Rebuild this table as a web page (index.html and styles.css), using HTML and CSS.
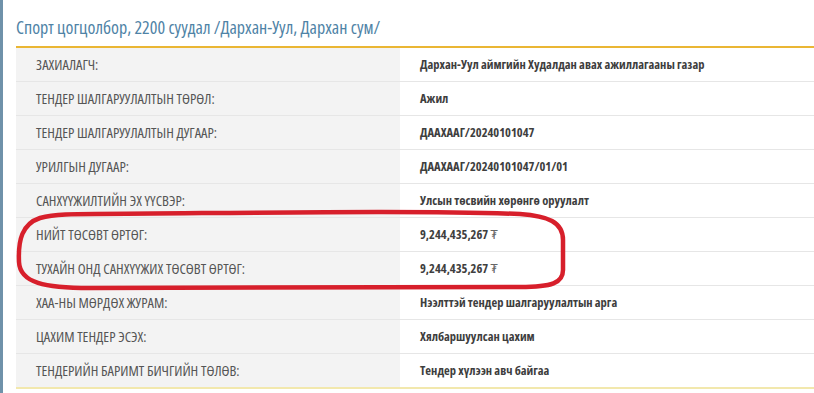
FILE: index.html
```html
<!DOCTYPE html>
<html lang="mn">
<head>
<meta charset="utf-8">
<link rel="stylesheet" href="styles.css">
</head>
<body>
<div class="page">
  <h1 class="title">Спорт цогцолбор, 2200 суудал /Дархан-Уул, Дархан сум/</h1>
  <div class="table">
    <div class="row"><div class="label">ЗАХИАЛАГЧ:</div><div class="value">Дархан-Уул аймгийн Худалдан авах ажиллагааны газар</div></div>
    <div class="row"><div class="label">ТЕНДЕР ШАЛГАРУУЛАЛТЫН ТӨРӨЛ:</div><div class="value">Ажил</div></div>
    <div class="row"><div class="label">ТЕНДЕР ШАЛГАРУУЛАЛТЫН ДУГААР:</div><div class="value">ДААХААГ/20240101047</div></div>
    <div class="row"><div class="label">УРИЛГЫН ДУГААР:</div><div class="value">ДААХААГ/20240101047/01/01</div></div>
    <div class="row"><div class="label">САНХҮҮЖИЛТИЙН ЭХ ҮҮСВЭР:</div><div class="value">Улсын төсвийн хөрөнгө оруулалт</div></div>
    <div class="row"><div class="label">НИЙТ ТӨСӨВТ ӨРТӨГ:</div><div class="value">9,244,435,267 <span class="cur">₮</span></div></div>
    <div class="row"><div class="label">ТУХАЙН ОНД САНХҮҮЖИХ ТӨСӨВТ ӨРТӨГ:</div><div class="value">9,244,435,267 <span class="cur">₮</span></div></div>
    <div class="row"><div class="label">ХАА-НЫ МӨРДӨХ ЖУРАМ:</div><div class="value">Нээлттэй тендер шалгаруулалтын арга</div></div>
    <div class="row"><div class="label">ЦАХИМ ТЕНДЕР ЭСЭХ:</div><div class="value">Хялбаршуулсан цахим</div></div>
    <div class="row"><div class="label">ТЕНДЕРИЙН БАРИМТ БИЧГИЙН ТӨЛӨВ:</div><div class="value">Тендер хүлээн авч байгаа</div></div>
  </div>
</div>
<svg class="mark" width="814" height="393" viewBox="0 0 814 393">
  <path d="M 95 214 C 250 213 420 210 520 214 C 548 216 563 222 563 240 L 563 270 C 563 283 552 287 520 287 L 90 288 C 45 288 20 283 19 262 C 18 240 22 224 40 218 C 55 214 75 214 95 214 Z" fill="none" stroke="#d71f2b" stroke-width="4.5"/>
</svg>
</body>
</html>
```
FILE: styles.css
```css
html, body {
  margin: 0;
  padding: 0;
  background: #ffffff;
}
body {
  width: 814px;
  height: 393px;
  overflow: hidden;
  position: relative;
  font-family: "Open Sans", "DejaVu Sans Condensed", sans-serif;
  font-stretch: 75%;
}
.page {
  border-left: 3px solid #6f92aa;
  padding-left: 13px;
  height: 393px;
  box-sizing: border-box;
}
.title {
  margin: 0;
  padding-top: 16px;
  height: 46px;
  box-sizing: border-box;
  font-weight: normal;
  font-size: 18px;
  color: #4f83a6;
  line-height: 22px;
}
.table {
  border-top: 2px solid #eab634;
  border-bottom: 2px solid #f2e8ad;
}
.row {
  display: grid;
  grid-template-columns: 384px 1fr;
  height: 34px;
  border-top: 1px solid #e6e6e6;
  box-sizing: border-box;
}
.row:first-child {
  border-top: none;
  height: 33px;
}
.label {
  background: #f3f3f3;
  padding-left: 20px;
  font-size: 14.5px;
  color: #555555;
  display: flex;
  align-items: center;
}
.value {
  padding-left: 20px;
  font-size: 12.5px;
  font-weight: bold;
  color: #3e3e3e;
  display: flex;
  align-items: center;
  white-space: pre;
}
.cur {
  font-weight: normal;
  color: #666;
}
.mark {
  position: absolute;
  left: 0;
  top: 0;
  pointer-events: none;
}
```
